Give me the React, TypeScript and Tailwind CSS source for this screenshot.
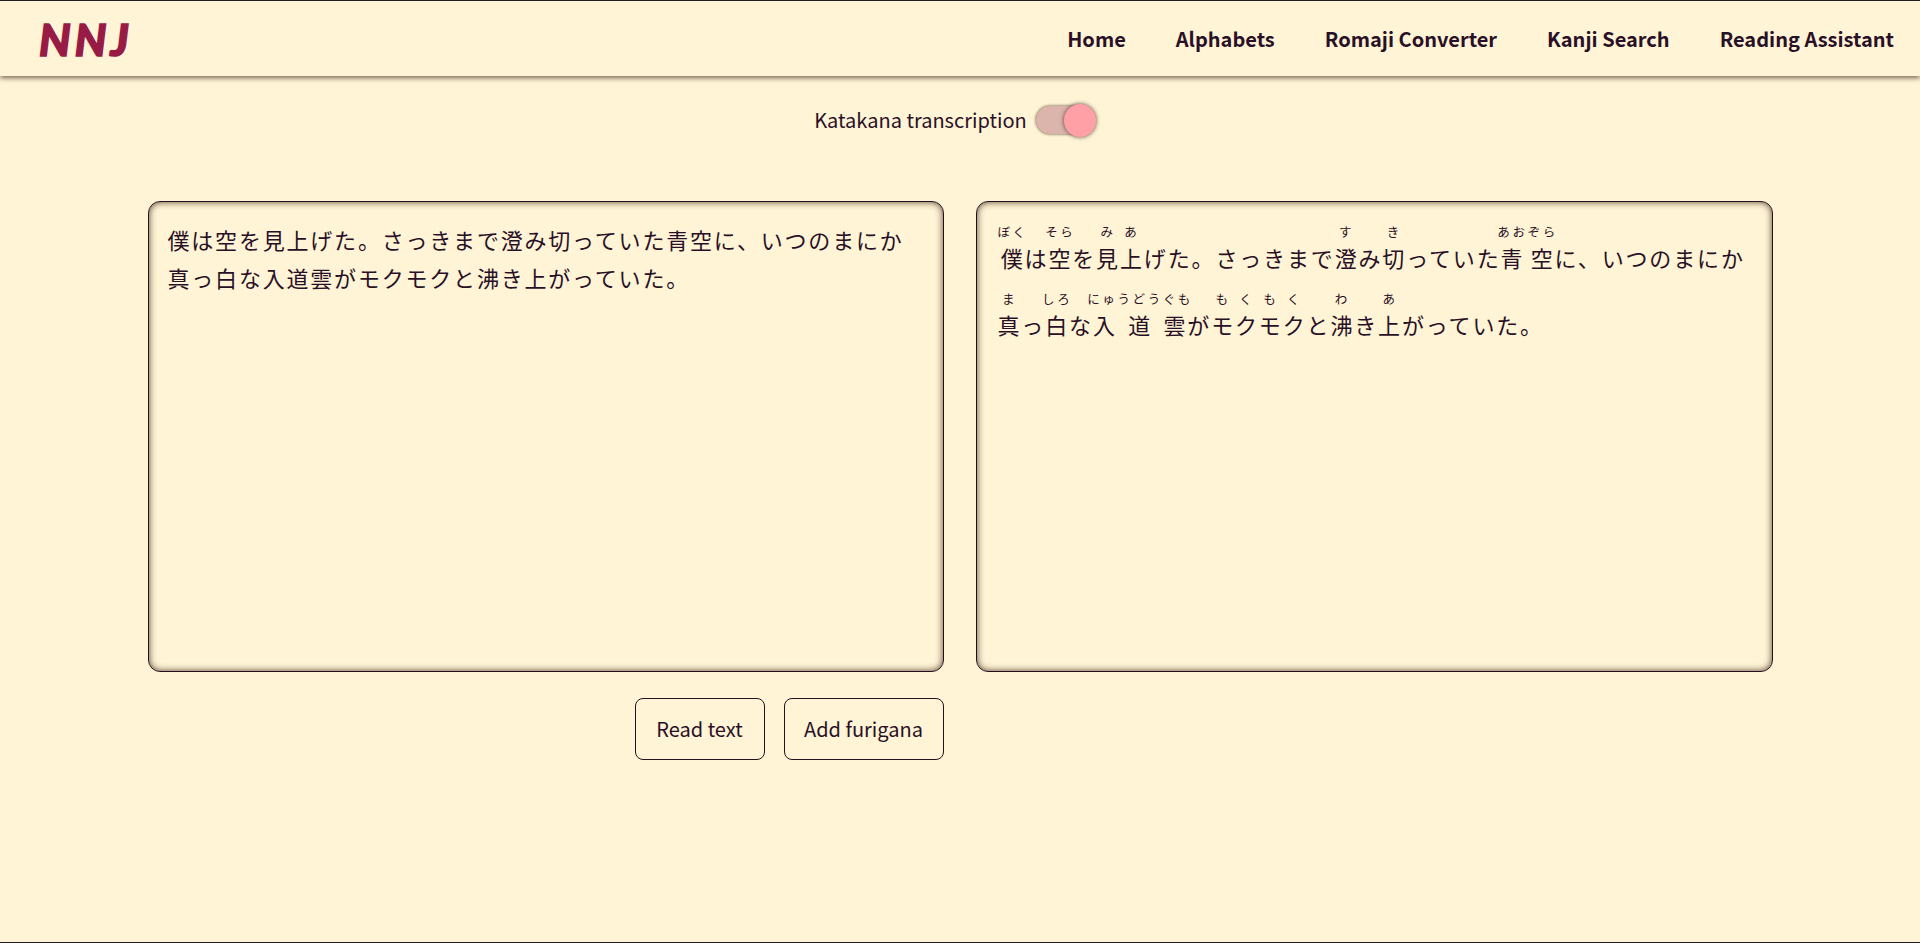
const cjk = "font-['Noto_Sans_CJK_JP','Noto_Sans',sans-serif]";

const navLinks = ["Home", "Alphabets", "Romaji Converter", "Kanji Search", "Reading Assistant"];

const sentenceOne: Array<[string, string?]> = [
  ["僕", "ぼく"], ["は"], ["空", "そら"], ["を"], ["見", "み"], ["上", "あ"], ["げた。さっきまで"],
  ["澄", "す"], ["み"], ["切", "き"], ["っていた"], ["青空", "あおぞら"], ["に、いつのまにか"],
];

const sentenceTwo: Array<[string, string?]> = [
  ["真", "ま"], ["っ"], ["白", "しろ"], ["な"], ["入道雲", "にゅうどうぐも"], ["が"], ["モクモク", "もくもく"], ["と"],
  ["沸", "わ"], ["き"], ["上", "あ"], ["がっていた。"],
];

function Furigana({ parts }: { parts: Array<[string, string?]> }) {
  return (
    <>
      {parts.map(([text, reading], i) =>
        reading ? (
          <ruby key={i}>
            {text}
            <rt className="pb-[6px] text-[12.5px] tracking-[2.6px]">{reading}</rt>
          </ruby>
        ) : (
          <span key={i}>{text}</span>
        ),
      )}
    </>
  );
}

export default function App() {
  return (
    <div className={`flex h-[943px] flex-col overflow-hidden border-y border-[#241c24] bg-[#fff4d6] text-[#2a1026] ${cjk}`}>
      <nav className="flex h-[75px] shrink-0 items-center justify-between bg-[#fff4d6] pl-[39px] pr-[26px] shadow-[0_2px_5px_rgba(60,40,30,0.7)]">
        <span className="font-['Lato',sans-serif] text-[44px] font-black italic leading-none tracking-[4px] text-[#971b45] [-webkit-text-stroke:1.5px_#971b45]">
          NNJ
        </span>
        <ul className="flex gap-[50px] text-[20px] font-semibold">
          {navLinks.map((link) => (
            <li key={link}>{link}</li>
          ))}
        </ul>
      </nav>

      <div className="mt-[26px] flex items-center justify-center gap-[9px] pr-[10px]">
        <span className="text-[20px] leading-[36px]">Katakana transcription</span>
        <div className="relative mr-[4px] h-[28px] w-[56px] rounded-full bg-[#dbb5ab] shadow-[0_0_3px_rgba(60,40,30,0.9)]">
          <div className="absolute -right-[4px] -top-[2.5px] h-[33px] w-[32px] rounded-full bg-[#ffa0a6] shadow-[0_0_4px_rgba(60,40,30,0.85)]" />
        </div>
      </div>

      <div className="mt-[63px] flex justify-center gap-[32px]">
        <div className="flex w-[796px] flex-col">
          <div className="h-[471px] rounded-[12px] border border-[#26101f] pb-[19px] pl-[19px] pr-[36px] pt-[18px] text-[22px] leading-[38px] tracking-[1.8px] shadow-[inset_0_0_7px_rgba(50,30,10,0.85)]">
            僕は空を見上げた。さっきまで澄み切っていた青空に、いつのまにか真っ白な入道雲がモクモクと沸き上がっていた。
          </div>
          <div className="mt-[26px] flex justify-end gap-[19px]">
            <button className="h-[62px] w-[130px] rounded-[8px] border border-[#26101f] text-[20px]">Read text</button>
            <button className="h-[62px] w-[160px] rounded-[8px] border border-[#26101f] text-[20px]">Add furigana</button>
          </div>
        </div>
        <div className="h-[471px] w-[797px] rounded-[12px] border border-[#26101f] py-[22px] pl-[21px] pr-[19px] text-[22px] leading-[67px] tracking-[1.85px] shadow-[inset_0_0_7px_rgba(50,30,10,0.85)]">
          <Furigana parts={sentenceOne} />
          <br />
          <Furigana parts={sentenceTwo} />
        </div>
      </div>
    </div>
  );
}
